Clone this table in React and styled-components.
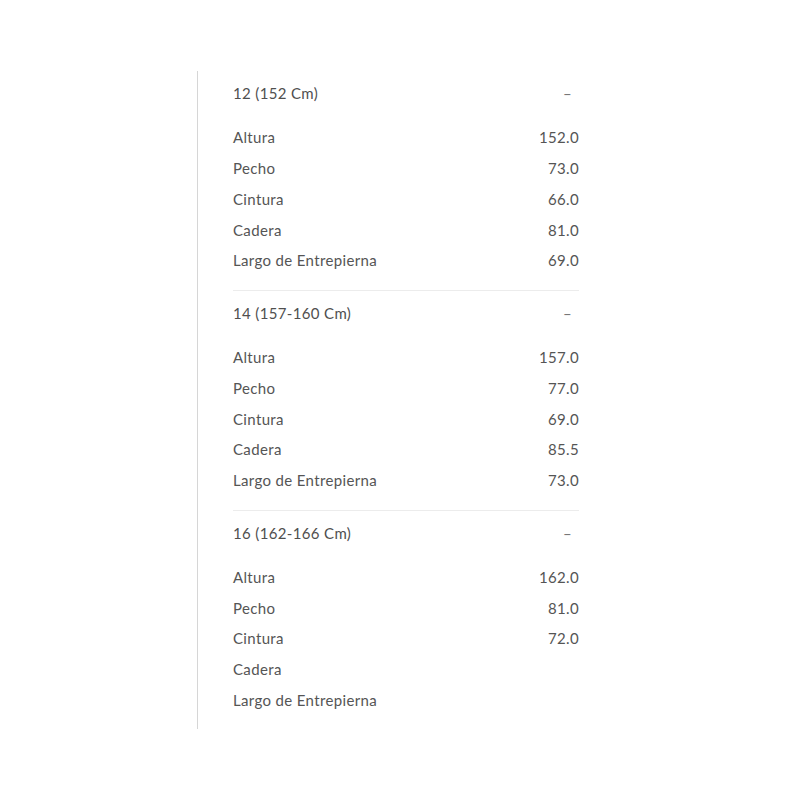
import React from 'react'
import styled, { createGlobalStyle } from 'styled-components'

const GlobalStyle = createGlobalStyle`
  body {
    margin: 0;
    background: #fff;
    font-family: Lato, "Noto Sans", sans-serif;
  }
`

const sizes = [
  {
    title: '12 (152 Cm)',
    rows: [
      ['Altura', '152.0'],
      ['Pecho', '73.0'],
      ['Cintura', '66.0'],
      ['Cadera', '81.0'],
      ['Largo de Entrepierna', '69.0'],
    ],
  },
  {
    title: '14 (157-160 Cm)',
    rows: [
      ['Altura', '157.0'],
      ['Pecho', '77.0'],
      ['Cintura', '69.0'],
      ['Cadera', '85.5'],
      ['Largo de Entrepierna', '73.0'],
    ],
  },
  {
    title: '16 (162-166 Cm)',
    rows: [
      ['Altura', '162.0'],
      ['Pecho', '81.0'],
      ['Cintura', '72.0'],
      ['Cadera', ''],
      ['Largo de Entrepierna', ''],
    ],
  },
]

function App() {
  return (
    <Page>
      <GlobalStyle />
      <Panel>
        {sizes.map((s, i) => (
          <Section key={s.title} last={i === sizes.length - 1}>
            <Header>
              <span>{s.title}</span>
              <Toggle>–</Toggle>
            </Header>
            <Rows>
              {s.rows.map(([label, value]) => (
                <Row key={label}>
                  <span>{label}</span>
                  <span>{value}</span>
                </Row>
              ))}
            </Rows>
          </Section>
        ))}
      </Panel>
    </Page>
  )
}

export default App

const Page = styled.div`
  display: flex;
  align-items: flex-start;
  padding: 71px 0 0 197px;
  min-height: 800px;
  box-sizing: border-box;
`

const Panel = styled.div`
  width: 346px;
  border-left: 1px solid #d6d6d6;
  padding: 0 0 0 35px;
`

const Section = styled.div`
  border-bottom: ${(p) => (p.last ? 'none' : '1px solid #ececec')};
`

const Header = styled.div`
  height: 44px;
  display: flex;
  align-items: center;
  justify-content: space-between;
  font-size: 15px;
  color: #4f4f4f;
  letter-spacing: 0.35px;
`

const Toggle = styled.span`
  color: #777;
  font-size: 15px;
  padding-right: 7px;
`

const Rows = styled.div`
  padding: 7px 0 14px;
`

const Row = styled.div`
  height: 30.75px;
  display: flex;
  align-items: center;
  justify-content: space-between;
  font-size: 15px;
  color: #555;
  letter-spacing: 0.35px;
`
